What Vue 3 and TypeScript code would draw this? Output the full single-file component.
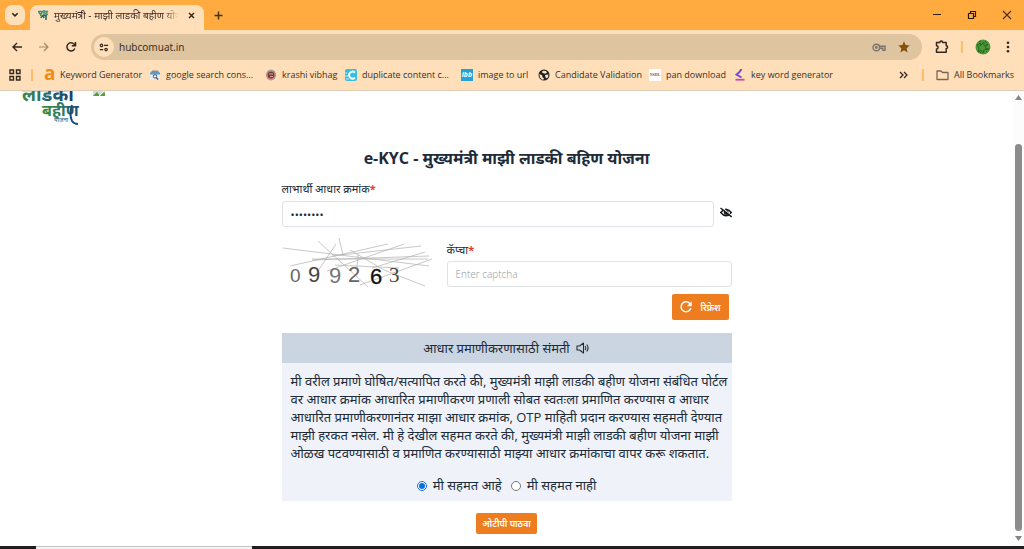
<script setup lang="ts">
import { ref } from 'vue'

interface Bookmark {
  icon: string
  label: string
  width: number
}

const bookmarks: Bookmark[] = [
  { icon: 'a', label: 'Keyword Generator', width: 105 },
  { icon: 'console', label: 'google search cons...', width: 116 },
  { icon: 'krashi', label: 'krashi vibhag', width: 80 },
  { icon: 'duplicate', label: 'duplicate content c...', width: 116 },
  { icon: 'ibb', label: 'image to url', width: 77 },
  { icon: 'globe', label: 'Candidate Validation', width: 111 },
  { icon: 'nsdl', label: 'pan download', width: 85 },
  { icon: 'key', label: 'key word generator', width: 100 },
]

const consentLines: string[] = [
  'मी वरील प्रमाणे घोषित/सत्यापित करते की, मुख्यमंत्री माझी लाडकी बहीण योजना संबंधित पोर्टल',
  'वर आधार क्रमांक आधारित प्रमाणीकरण प्रणाली सोबत स्वतःला प्रमाणित करण्यास व आधार',
  'आधारित प्रमाणीकरणानंतर माझा आधार क्रमांक, OTP माहिती प्रदान करण्यास सहमती देण्यात',
  'माझी हरकत नसेल. मी हे देखील सहमत करते की, मुख्यमंत्री माझी लाडकी बहीण योजना माझी',
  'ओळख पटवण्यासाठी व प्रमाणित करण्यासाठी माझ्या आधार क्रमांकाचा वापर करू शकतात.',
]

const aadhaar = ref('12345678')
const captcha = ref('')
const consent = ref('yes')
</script>

<template>
  <div class="window">
    <header class="chrome">
      <div class="tabs">
        <button class="tab-search" aria-label="Search tabs">
          <svg width="8" height="6" viewBox="0 0 8 6"><path d="M1.3 1.2 4 3.9 6.7 1.2" fill="none" stroke="#2d241a" stroke-width="1.5" /></svg>
        </button>
        <div class="tab">
          <svg class="tab-icon" width="12" height="12" viewBox="0 0 12 12">
            <path d="M1 2.5h5M2 2.5c0 3 3 3 3 0M7 1v5M7 2.5h4M8 4.5l3 1" fill="none" stroke="#3d8b91" stroke-width="1.5" />
            <path d="M3 6.5h7M4 9q2-4 3 0M9 6v5" fill="none" stroke="#286d62" stroke-width="1.6" />
            <path d="M3 5 5 7M9 4l2-2" stroke="#58a43a" stroke-width="1.5" />
          </svg>
          <span class="tab-title">मुख्यमंत्री - माझी लाडकी बहीण योजना</span>
          <button class="tab-close" aria-label="Close tab">
            <svg width="7" height="7" viewBox="0 0 7 7"><path d="m1 1 5 5M6 1 1 6" stroke="#2d241a" stroke-width="1.4" /></svg>
          </button>
        </div>
        <button class="new-tab" aria-label="New tab">
          <svg width="9" height="9" viewBox="0 0 9 9"><path d="M4.5.5v8M.5 4.5h8" stroke="#4a3010" stroke-width="1.5" /></svg>
        </button>
        <div class="window-buttons">
          <button aria-label="Minimize"><svg width="10" height="10" viewBox="0 0 10 10"><path d="M1 4.5h8" stroke="#2d1b08" /></svg></button>
          <button aria-label="Restore"><svg width="10" height="10" viewBox="0 0 10 10"><path d="M1.5 3.5h5v5h-5zM3.5 3V1.5h5v5H7" fill="none" stroke="#2d1b08" stroke-width="1.2" /></svg></button>
          <button aria-label="Close window"><svg width="10" height="10" viewBox="0 0 10 10"><path d="m1 1 8 8M9 1 1 9" stroke="#4a3010" stroke-width="1.1" /></svg></button>
        </div>
      </div>

      <nav class="toolbar" aria-label="Navigation">
        <button aria-label="Back"><svg width="12" height="12" viewBox="0 0 12 12"><path d="M11 6H2M6 2 2 6l4 4" fill="none" stroke="#33291f" stroke-width="1.4" /></svg></button>
        <button aria-label="Forward"><svg width="12" height="12" viewBox="0 0 12 12"><path d="M1 6h9M6 2l4 4-4 4" fill="none" stroke="#a4896b" stroke-width="1.2" /></svg></button>
        <button aria-label="Reload"><svg width="12" height="12" viewBox="0 0 12 12"><path d="M9.8 7.5A4.1 4.1 0 1 1 9 3.1L10.4 4.5M10.5 1v3.8H6.8" fill="none" stroke="#33291f" stroke-width="1.5" /></svg></button>
        <div class="address">
          <button class="site-info" aria-label="Site information">
            <svg width="10" height="9" viewBox="0 0 12 10"><g fill="none" stroke="#33291f" stroke-width="1.4"><circle cx="3" cy="2.5" r="1.5" /><path d="M6 2.5h5M1 7.5h4" /><circle cx="8.5" cy="7.5" r="1.5" /></g></svg>
          </button>
          <input class="url" type="text" value="hubcomuat.in" aria-label="Address" />
          <svg width="15" height="9" viewBox="0 0 15 9"><g fill="none" stroke="#79736b" stroke-width="1.4"><circle cx="4.3" cy="4.5" r="3.3" /><circle cx="4.3" cy="4.5" r=".7" /><path d="M7.5 3.2H13v4.2h-2.2V5.3h-3" /></g></svg>
          <svg width="12" height="12" viewBox="0 0 12 12"><path d="m6 .3 1.6 3.8 4.1.4-3.1 2.7.9 4.2L6 9.2l-3.5 2.2.9-4.2L.3 4.5l4.1-.4z" fill="#85500f" /></svg>
        </div>
        <button class="extensions" aria-label="Extensions"><svg width="14" height="14" viewBox="0 0 14 14"><path d="M1.5 2.5h3.4a1.4 1.4 0 0 1 2.8 0h3.5v3.3a1.4 1.4 0 0 1 0 2.8v3.6H1.5V9a1.6 1.6 0 0 0 0-3.2z" fill="none" stroke="#33291f" stroke-width="1.5" stroke-linejoin="round" /></svg></button>
        <span class="divider" />
        <button class="profile" aria-label="Profile"><svg width="16" height="16" viewBox="0 0 16 16"><circle cx="8" cy="8" r="7.5" fill="#4f983a" /><path d="m2 6 4-2-1 3 4-4v4l4-2-3 4 4 1-5 1-1 3-2-3-3 2 1-4zM4 3l2-1M10 2l2 2M3 11l3 3M11 12l1 1" fill="none" stroke="#28691f" stroke-width="1" /></svg></button>
        <button class="menu" aria-label="Menu"><svg width="4" height="12" viewBox="0 0 4 12" fill="#33291f"><circle cx="2" cy="1.7" r="1.3" /><circle cx="2" cy="6" r="1.3" /><circle cx="2" cy="10.3" r="1.3" /></svg></button>
      </nav>

      <nav class="bookmarks" aria-label="Bookmarks">
        <button aria-label="Apps"><svg width="12" height="12" viewBox="0 0 12 12"><path d="M1 1h3.5v3.5H1zM7.5 1H11v3.5H7.5zM1 7.5h3.5V11H1zM7.5 7.5H11V11H7.5z" fill="none" stroke="#33291f" stroke-width="1.4" /></svg></button>
        <span class="divider first-divider" />
        <a v-for="b in bookmarks" :key="b.icon" href="#" class="bookmark" :style="{ width: b.width + 'px' }">
          <span v-if="b.icon === 'a'" class="letter-a">a</span>
          <svg v-else-if="b.icon === 'console'" width="12" height="12" viewBox="0 0 12 12"><path d="M1 5h10v6H1z" fill="#e6ebef" /><path d="m1 4 2-2h6l2 2v1.5H1z" fill="#4b9de5" /><path d="M3 1.5h6v2H3z" fill="#8d8f94" /><circle cx="6" cy="7.3" r="1.7" fill="#fff" stroke="#46576c" /><path d="m7.3 8.7 1.8 1.8" stroke="#46576c" stroke-width="1.4" /></svg>
          <svg v-else-if="b.icon === 'krashi'" width="12" height="12" viewBox="0 0 12 12"><circle cx="6" cy="6" r="5" fill="#cf7b70" /><path d="M2 3q4-4 8 0M2 9q4 4 8 0" fill="none" stroke="#88a9b4" /><circle cx="6" cy="6" r="3.2" fill="#674039" /><path d="M4 5h4M5 7.5h3" stroke="#d7a99a" /></svg>
          <svg v-else-if="b.icon === 'duplicate'" width="12" height="12" viewBox="0 0 12 12"><rect width="12" height="12" rx="2" fill="#35bfe4" /><path d="M0 4h2M0 7h3M1 10h3" stroke="#bceaf5" /><path d="M10 3.5A3.5 3.5 0 1 0 10 8.7" fill="none" stroke="#fff" stroke-width="1.9" /></svg>
          <span v-else-if="b.icon === 'ibb'" class="ibb">ibb</span>
          <svg v-else-if="b.icon === 'globe'" width="12" height="12" viewBox="0 0 12 12"><circle cx="6" cy="6" r="5.5" fill="#202124" /><path d="M1.5 5 4 6.2l.5 2L6 9.5 5 11Q1 9 1.5 5M5 1.8 8 2l1 1.8-2 1-2-.8-1.3-.8zM7 6l3.5-.5-.7 3.2-2 .5z" fill="#ffdfb9" /></svg>
          <span v-else-if="b.icon === 'nsdl'" class="nsdl">NSDL</span>
          <svg v-else width="12" height="12" viewBox="0 0 12 12"><path d="M7.5 0 5.5 3 2.5 5.5l5 3" fill="none" stroke="#754ed5" stroke-width="2" /><path d="M1.5 10.7h9" stroke="#cf4b9a" stroke-width="1.8" /></svg>
          <span>{{ b.label }}</span>
        </a>
        <button class="more" aria-label="More bookmarks"><svg width="9" height="8" viewBox="0 0 9 8"><path d="m1 1 3 3-3 3M5 1l3 3-3 3" fill="none" stroke="#33291f" stroke-width="1.3" /></svg></button>
        <span class="divider all-divider" />
        <a href="#" class="bookmark"><svg width="13" height="12" viewBox="0 0 13 12"><path d="M1 2h4l1.5 1.5H12V10.5H1z" fill="none" stroke="#776958" stroke-width="1.3" stroke-linejoin="round" /></svg><span>All Bookmarks</span></a>
      </nav>
    </header>

    <div class="viewport">
      <main class="page">
        <div class="brand">
          <svg class="logo" width="60" height="34" viewBox="0 0 60 34" role="img" aria-label="लाडकी बहीण योजना">
            <defs>
              <linearGradient id="ink" gradientUnits="userSpaceOnUse" x1="0" x2="50" y1="0" y2="0"><stop stop-color="#418847" /><stop offset=".5" stop-color="#256c70" /><stop offset="1" stop-color="#1d4263" /></linearGradient>
              <linearGradient id="ink-green" gradientUnits="userSpaceOnUse" x1="20" x2="58" y1="0" y2="0"><stop stop-color="#3e8d3f" /><stop offset=".6" stop-color="#2a7568" /><stop offset="1" stop-color="#1d4b74" /></linearGradient>
            </defs>
            <text x="1" y="10" class="logo-word" fill="url(#ink)">लाडकी</text>
            <text x="21" y="25" class="logo-word small" fill="url(#ink-green)">बहीण</text>
            <path d="M51 14q-3 10 0 16 2 3 6 3" fill="none" stroke="#1d4b74" stroke-width="2" />
            <text x="33" y="31" class="logo-caption">योजना</text>
          </svg>
          <svg width="12" height="6" viewBox="0 0 12 6"><path d="M0 0h12v5H0z" fill="#d3dcd9" /><path d="m0 5 4-4 3 4zM7 5l4-4 1 1v3z" fill="#50a23c" /><path d="m6 5 5-5" stroke="#fff" /></svg>
        </div>

        <form class="form" @submit.prevent>
          <h1>e-KYC - मुख्यमंत्री माझी लाडकी बहिण योजना</h1>
          <label class="label" for="aadhaar">लाभार्थी आधार क्रमांक<b>*</b></label>
          <div class="aadhaar-row">
            <input id="aadhaar" v-model="aadhaar" class="field secret" type="password" />
            <button type="button" class="eye" aria-label="Show number">
              <svg width="12" height="11" viewBox="0 0 13 11"><path d="M.8 5.5Q6.5-1.5 12.2 5.5 6.5 12.5.8 5.5z" fill="none" stroke="#15181b" stroke-width="1.6" /><circle cx="6.8" cy="5.5" r="2.7" fill="#15181b" /><circle cx="6.2" cy="4.6" r=".9" fill="#fff" /><path d="M1.4-.2 13 9.2" stroke="#fff" stroke-width="1.2" /><path d="m.6.6 12 9.8" stroke="#15181b" stroke-width="1.6" /></svg>
            </button>
          </div>

          <div class="captcha-row">
            <svg width="150" height="52" viewBox="0 0 150 52" role="img" aria-label="099263">
              <path d="m1 10 146 18M8 28l98-22M36 3l50 46M54 6 36 33M57 0l4 17M30 22l117-4M45 33l77-27M68 12l34 20 41 16M76 16l-1 14M50 18l89-10M53 27l64 3M78 47l72-26M90 30l53-16M30 21h116" fill="none" stroke="#b0b0b0" stroke-width=".7" />
              <text x="8" y="44" class="digit thin" fill="#666">0</text>
              <text x="26" y="44" class="digit" fill="#444">9</text>
              <text x="47" y="45" class="digit" fill="#777">9</text>
              <text x="66" y="44" class="digit" fill="#666">2</text>
              <text x="88" y="46" class="digit" fill="#111" stroke="#111" stroke-width=".3">6</text>
              <text x="107" y="44" class="digit serif" fill="#444">3</text>
            </svg>
            <div class="captcha-field">
              <label class="label" for="captcha">कॅप्चा<b>*</b></label>
              <input id="captcha" v-model="captcha" class="field" type="text" placeholder="Enter captcha" />
            </div>
          </div>
          <button type="button" class="action refresh">
            <svg width="14" height="14" viewBox="0 0 14 14"><path d="M11.8 8.3A5 5 0 1 1 10.8 3.5L12 4.7" fill="none" stroke="#fff" stroke-width="1.5" /><path d="M12.7 1.3v4.9H7.8z" fill="#fff" /></svg>
            <span>रिफ्रेश</span>
          </button>

          <section class="consent">
            <h2>आधार प्रमाणीकरणासाठी संमती
              <svg width="14" height="12" viewBox="0 0 14 12"><g fill="none" stroke="#252b32" stroke-width="1.1"><path d="M1 4v4h2.5L7.5 11V1L3.5 4z" stroke-linejoin="round" /><path d="M9 4q1.5 2 0 4M10.7 2.5q2.8 3.5 0 7" /></g></svg>
            </h2>
            <p><span v-for="line in consentLines" :key="line">{{ line }} </span></p>
            <div class="choices">
              <label><input v-model="consent" type="radio" name="consent" value="yes" />मी सहमत आहे</label>
              <label><input v-model="consent" type="radio" name="consent" value="no" />मी सहमत नाही</label>
            </div>
          </section>
          <button type="submit" class="action send">ओटीपी पाठवा</button>
        </form>
      </main>
      <div class="scrollbar" aria-hidden="true">
        <svg width="7" height="5" viewBox="0 0 7 5"><path d="m3.5 0 3.5 5H0z" fill="#858585" /></svg>
        <span class="thumb" />
        <svg width="7" height="5" viewBox="0 0 7 5"><path d="M0 0h7L3.5 5z" fill="#858585" /></svg>
      </div>
    </div>
    <footer class="taskbar"><span /></footer>
  </div>
</template>

<style>
body { margin: 0; }
</style>

<style scoped>
.window { display: flex; flex-direction: column; height: 100vh; overflow: hidden; background: #fff; font-family: "Open Sans", "Noto Sans", sans-serif; color: #212b38; }
.window * { box-sizing: border-box; }
button { border: 0; padding: 0; background: none; font-family: inherit; }
svg { display: block; flex: none; }
.chrome { flex: none; height: 91px; background: #ffdfb9; border-bottom: 1px solid #dfcdb8; font-family: "Noto Sans", sans-serif; }
.tabs { display: flex; height: 30px; padding-left: 5px; background: #ffab40; }
.tab-search { display: grid; place-items: center; width: 20px; height: 20px; margin: 5px 5px 0 0; border-radius: 7px; background: #ffdfb9; }
.tab { display: flex; align-items: center; width: 174px; margin-top: 5px; padding: 0 9px 5px 7px; border-radius: 8px 8px 0 0; background: #ffdfb9; }
.tab-title { flex: 1; min-width: 0; margin-left: 5px; overflow: hidden; white-space: nowrap; font-size: 10px; line-height: 18px; color: #3b3025; mask-image: linear-gradient(to right, #000 88%, transparent); }
.tab-close { margin-left: 9px; }
.new-tab { margin-left: 10px; }
.window-buttons { display: flex; gap: 25px; margin-left: auto; padding-right: 12px; }
.toolbar { display: flex; align-items: center; height: 34px; padding: 0 14px 0 11px; gap: 15px; background: #ffdfb9; }
.address { display: flex; align-items: center; flex: 1; height: 26px; margin-left: -1px; padding: 0 12px 0 3px; gap: 11px; border-radius: 13px; background: #dfc4a0; }
.site-info { display: grid; place-items: center; width: 20px; height: 20px; border-radius: 50%; background: #ffdfb9; }
.url { flex: 1; min-width: 0; margin-left: -6px; padding: 0; border: 0; background: none; font: 10px/20px "Noto Sans", sans-serif; color: #3b3025; outline: none; }
.divider { flex: none; width: 2px; height: 12px; background: #ffbd69; }
.toolbar .divider { margin: 0 -3px 0 -3px; }
.extensions { margin-left: -2px; }
.bookmarks { display: flex; align-items: center; height: 22px; padding: 0 10px 0 9px; white-space: nowrap; }
.first-divider { margin: 0 11px 0 10px; }
.bookmark { display: flex; align-items: center; gap: 5px; color: #3b3025; text-decoration: none; font: 9px/18px "Open Sans", sans-serif; }
.letter-a { width: 11px; font: bold 19px/16px "Open Sans", sans-serif; color: #f28c18; padding-bottom: 4px; }
.ibb { width: 12px; height: 12px; background: #23a1db; color: #fff; font: italic bold 7px/12px "Open Sans", sans-serif; text-align: center; }
.nsdl { width: 12px; height: 12px; background: #fff; color: #a74050; font: bold 4px/12px "Liberation Serif", serif; text-align: center; }
.more { margin-left: auto; }
.all-divider { margin: 0 12px 0 14px; }
.viewport { display: flex; flex: 1; min-height: 0; }
.page { flex: 1; min-width: 0; overflow: hidden; padding: 0 16px; }
.brand { display: flex; height: 57px; padding-left: 5px; gap: 12px; }
.logo-word { font: bold italic 19px "Noto Sans", sans-serif; }
.logo-word.small { font-size: 16px; }
.logo-caption { font: 6px "Noto Sans", sans-serif; fill: #28606e; }
.form { display: flex; flex-direction: column; width: 100%; max-width: 450px; margin: 0 auto; }
h1 { margin: 0; text-align: center; white-space: nowrap; font-size: 16px; font-weight: 700; line-height: 20px; }
.label { display: block; font-size: 11px; line-height: 16px; white-space: nowrap; }
.label b { color: #dc3d32; }
.form > .label { margin-top: 13px; }
.aadhaar-row { display: flex; align-items: center; margin-top: 4px; gap: 6px; }
.eye { margin-bottom: 4px; }
.field { width: 100%; height: 26px; padding: 0 8px; border: 1px solid #dee2e6; border-radius: 3px; background: #fff; font: 10px "Open Sans", "Noto Sans", sans-serif; color: #212b38; outline: none; }
.field::placeholder { color: #8f969e; font-weight: 300; opacity: 1; }
.field.secret { flex: 1; min-width: 0; font-size: 11px; }
.captcha-row { display: flex; align-items: flex-start; margin-top: 11px; gap: 15px; }
.captcha-field { flex: 1; padding-top: 4px; }
.captcha-field .field { margin-top: 3px; }
.digit { font: 22px "Liberation Sans", sans-serif; }
.digit.thin { font-size: 19px; }
.digit.serif { font: 21px "Liberation Serif", serif; }
.action { display: flex; align-items: center; justify-content: center; border-radius: 2px; background: #ed7d1f; color: #fff; font-size: 9px; font-weight: 600; white-space: nowrap; }
.refresh { align-self: flex-end; width: 57px; height: 26px; margin: 4px 3px 0 0; gap: 7px; }
.consent { margin-top: 13px; background: #eff3f9; }
h2 { display: flex; align-items: center; justify-content: center; gap: 6px; height: 30px; margin: 0; background: #cbd5e1; font-size: 13px; font-weight: 400; white-space: nowrap; }
p { margin: 0; padding: 9px 9px 0; font-size: 13px; line-height: 18px; }
p span { display: block; white-space: nowrap; }
.choices { display: flex; justify-content: center; padding: 13px 0 5px; gap: 9px; font-size: 13px; line-height: 21px; white-space: nowrap; }
.choices label { display: flex; align-items: center; gap: 6px; }
.choices input { width: 10px; height: 10px; margin: 0; accent-color: #0b6fe0; }
.send { align-self: center; width: 61px; height: 21px; margin-top: 12px; }
.scrollbar { display: flex; flex: none; flex-direction: column; align-items: center; width: 11px; padding: 4px 0 5px; background: #fcfcfc; }
.thumb { flex: 1; width: 7px; margin: 44px 0 5px; border-radius: 4px; background: #8b8b8b; }
.taskbar { flex: none; height: 3px; padding-left: 36px; background: #211e20; }
.taskbar span { display: block; width: 216px; height: 3px; background: #f3f3f3; border-top: 1px solid #c5c5c5; }
</style>
